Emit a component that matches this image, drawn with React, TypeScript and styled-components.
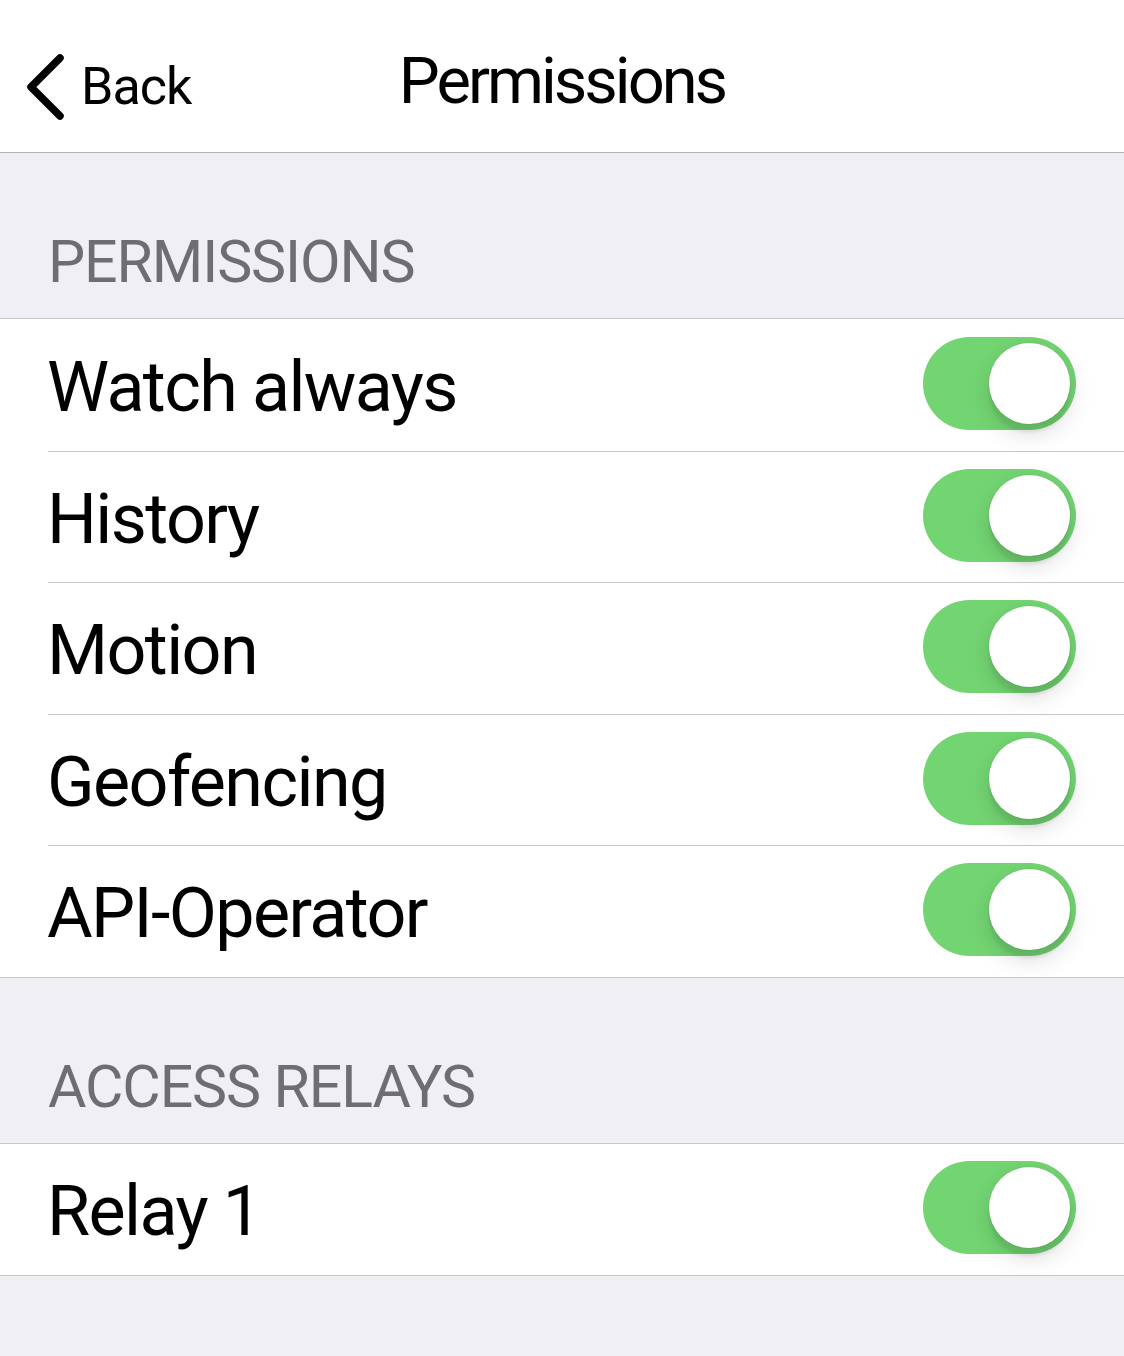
import React from "react";
import styled, { createGlobalStyle } from "styled-components";

const Global = createGlobalStyle`
  html, body { margin: 0; padding: 0; }
  body {
    background: #efeff4;
    font-family: Roboto, "Liberation Sans", Arial, sans-serif;
    -webkit-font-smoothing: antialiased;
  }
`;

const Page = styled.div`
  width: 1124px;
  min-height: 1356px;
  background: #efeff4;
`;

const NavBar = styled.header`
  background: #ffffff;
  border-bottom: 1px solid #b2b2b2;
  display: grid;
  grid-template-columns: 1fr auto 1fr;
  align-items: center;
  padding-top: 10px;
  box-sizing: border-box;
  height: 153px;
`;

const BackButton = styled.button`
  display: flex;
  align-items: center;
  gap: 15px;
  background: none;
  border: none;
  padding: 12px 0 0 26px;
  margin: 0;
  color: #000;
  font-family: inherit;
  font-size: 52px;
  cursor: pointer;
  justify-self: start;
`;

const BackLabel = styled.span`
  line-height: 1;
  letter-spacing: -1px;
`;

const Title = styled.h1`
  margin: 0;
  font-size: 65px;
  font-weight: 400;
  color: #000;
  letter-spacing: -3px;
  line-height: 1;
`;

const SectionHeader = styled.div`
  height: 165px;
  box-sizing: border-box;
  display: flex;
  align-items: flex-end;
  padding: 0 0 27px 48px;
  color: #6d6d72;
  font-size: 59px;
  letter-spacing: -1.1px;
  line-height: 1;
  text-transform: uppercase;
`;

const Group = styled.section`
  background: #ffffff;
  border-top: 1px solid #c8c7cc;
  border-bottom: 1px solid #c8c7cc;
`;

const Row = styled.div`
  height: 131.5px;
  box-sizing: border-box;
  margin-left: 48px;
  padding-right: 48px;
  display: flex;
  align-items: center;
  justify-content: space-between;
  & + & {
    border-top: 1px solid #c8c7cc;
  }
`;

const RowLabel = styled.span`
  font-size: 70px;
  color: #000;
  letter-spacing: -1.6px;
  line-height: 1;
  margin-left: -1px;
  padding-top: 4px;
`;

const Track = styled.div<{ $on: boolean }>`
  width: 153px;
  height: 93px;
  border-radius: 47px;
  background: ${(p) => (p.$on ? "#73d572" : "#e5e5ea")};
  position: relative;
  flex-shrink: 0;
  margin-top: -3px;
`;

const Knob = styled.div<{ $on: boolean }>`
  position: absolute;
  top: 6px;
  left: ${(p) => (p.$on ? "66px" : "6px")};
  width: 81px;
  height: 81px;
  border-radius: 50%;
  background: #ffffff;
  box-shadow: 0 9px 24px rgba(0, 0, 0, 0.15), 0 9px 3px rgba(0, 0, 0, 0.06),
    0 0 0 1px rgba(0, 0, 0, 0.04);
`;

const Toggle = ({ on }: { on: boolean }) => (
  <Track $on={on}>
    <Knob $on={on} />
  </Track>
);

const Chevron = () => (
  <svg width="40" height="66" viewBox="0 0 40 66" fill="none">
    <path
      d="M34 4 L5 33 L34 62"
      stroke="#000"
      strokeWidth="7.5"
      strokeLinecap="round"
      strokeLinejoin="round"
    />
  </svg>
);

const permissions = ["Watch always", "History", "Motion", "Geofencing", "API-Operator"];
const relays = ["Relay 1"];

export default function App() {
  return (
    <Page>
      <Global />
      <NavBar>
        <BackButton>
          <Chevron />
          <BackLabel>Back</BackLabel>
        </BackButton>
        <Title>Permissions</Title>
        <div />
      </NavBar>
      <SectionHeader>Permissions</SectionHeader>
      <Group>
        {permissions.map((p) => (
          <Row key={p}>
            <RowLabel>{p}</RowLabel>
            <Toggle on />
          </Row>
        ))}
      </Group>
      <SectionHeader>Access Relays</SectionHeader>
      <Group>
        {relays.map((p) => (
          <Row key={p}>
            <RowLabel>{p}</RowLabel>
            <Toggle on />
          </Row>
        ))}
      </Group>
    </Page>
  );
}
